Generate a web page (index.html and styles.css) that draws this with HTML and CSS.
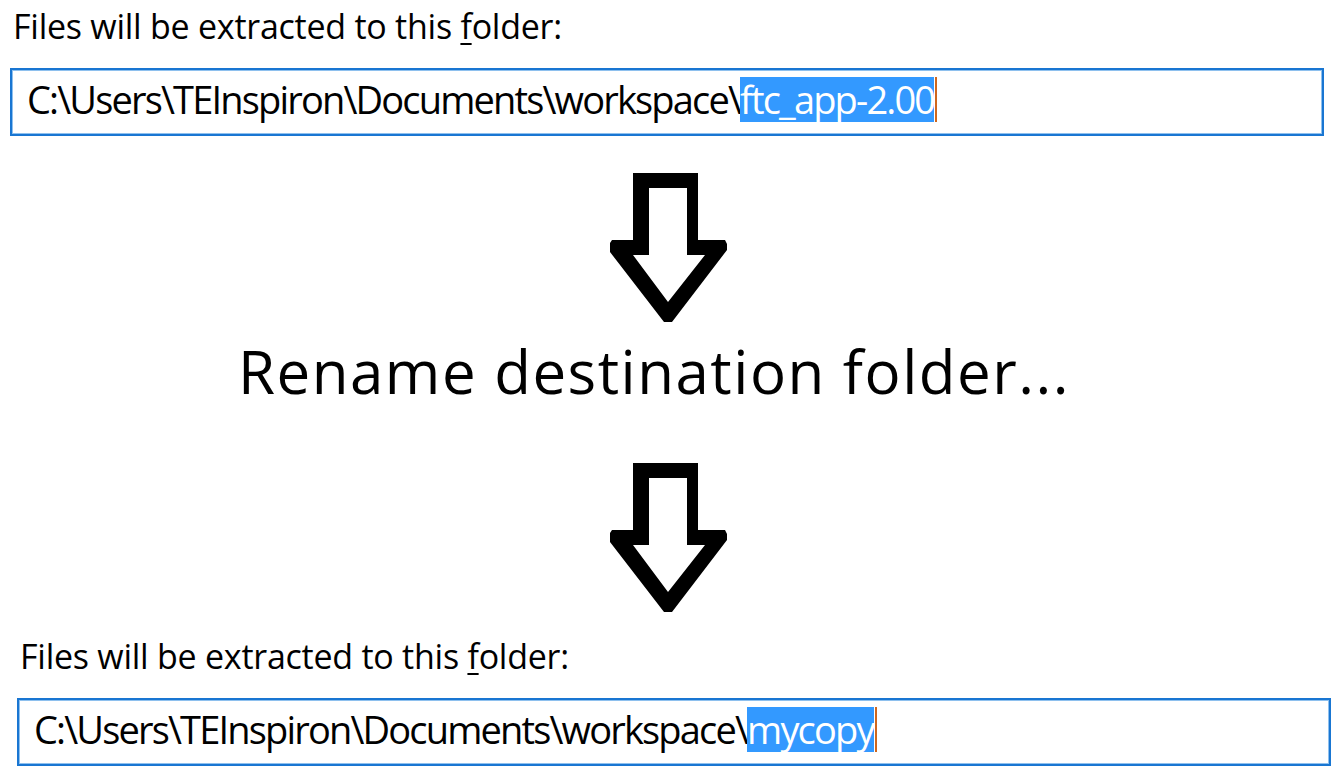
FILE: index.html
```html
<!DOCTYPE html>
<html lang="en">
<head>
<meta charset="utf-8">
<title>Rename destination folder</title>
<link rel="stylesheet" href="styles.css">
</head>
<body>
<main class="page">
  <section class="extract extract-top">
    <div class="label">Files will be extracted to this <u>f</u>older:</div>
    <div class="pathbox">
      <div class="pathline">C:\Users\TEInspiron\Documents\workspace\<span class="sel">ftc_app-2.00</span><span class="caret"></span></div>
    </div>
  </section>

  <svg class="arrow arrow-one" viewBox="0 0 136 165" width="136" height="165" aria-hidden="true">
    <path fill-rule="evenodd" d="M33 8 L98 8 L98 75 L125 75 L127 79 L127 85 L72 157 L64 157 L10 87 L10 78 L12 75 L33 75 Z M49 23 L49 90 L33 90 L68 137 L105 90 L87 90 L87 23 Z"/>
  </svg>

  <h1 class="title">Rename destination folder...</h1>

  <svg class="arrow arrow-two" viewBox="0 0 136 165" width="136" height="165" aria-hidden="true">
    <path fill-rule="evenodd" d="M33 8 L98 8 L98 75 L125 75 L127 79 L127 85 L72 157 L64 157 L10 87 L10 78 L12 75 L33 75 Z M49 23 L49 90 L33 90 L68 137 L105 90 L87 90 L87 23 Z"/>
  </svg>

  <section class="extract extract-bottom">
    <div class="label">Files will be extracted to this <u>f</u>older:</div>
    <div class="pathbox">
      <div class="pathline">C:\Users\TEInspiron\Documents\workspace\<span class="sel">mycopy</span><span class="caret"></span></div>
    </div>
  </section>
</main>
</body>
</html>
```

FILE: styles.css
```css
* { box-sizing: border-box; }
html, body { margin: 0; padding: 0; background: #ffffff; }
body {
  font-family: "Open Sans", "Noto Sans", sans-serif;
  color: #000;
  width: 1344px;
  height: 778px;
  overflow: hidden;
}
.page {
  display: flex;
  flex-direction: column;
  padding-top: 6px;
}
.extract { display: flex; flex-direction: column; }
.extract-top { padding-left: 10px; }
.extract-bottom { padding-left: 17px; margin-top: 16px; }
.label {
  font-size: 34px;
  line-height: 40px;
  height: 40px;
  padding-left: 3px;
  letter-spacing: -0.25px;
  white-space: nowrap;
}
.label u { text-underline-offset: 4px; text-decoration-thickness: 2px; }
.pathbox {
  margin-top: 22px;
  width: 1314px;
  height: 68px;
  border: 2px solid #1976d2;
  box-shadow: inset 0 0 0 1px #8ec0ee;
  padding: 7px 0 0 15px;
  display: flex;
  align-items: flex-start;
}
.pathline {
  font-size: 38px;
  line-height: 45px;
  height: 45px;
  letter-spacing: -1.83px;
  white-space: nowrap;
  display: flex;
  align-items: stretch;
}
.sel {
  background: #3399ff;
  color: #ffffff;
  display: inline-block;
}
.caret {
  display: inline-block;
  width: 2px;
  margin-left: 1px;
  background: #d0661c;
}
.arrow { display: block; align-self: flex-start; margin-left: 600px; }
.arrow-one { margin-top: 29px; }
.arrow-two { margin-top: 54px; }
.title {
  margin: 11px 0 0 0;
  font-size: 60px;
  font-weight: 400;
  line-height: 60px;
  height: 60px;
  padding-left: 238px;
  letter-spacing: 1.5px;
  white-space: nowrap;
}
```
